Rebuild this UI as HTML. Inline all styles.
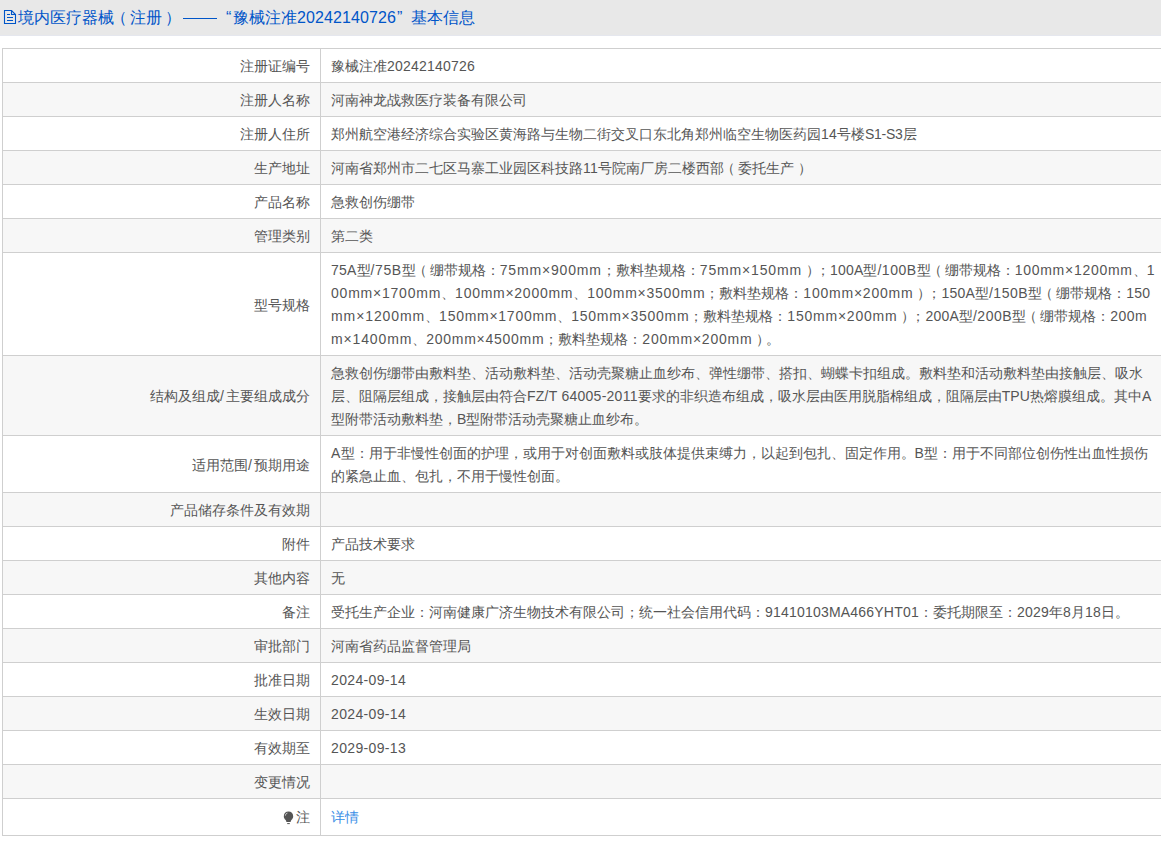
<!DOCTYPE html>
<html><head><meta charset="utf-8">
<style>
html,body{margin:0;padding:0;background:#fff;}
body{width:1161px;height:848px;overflow:hidden;position:relative;font-family:"Liberation Sans",sans-serif;}
.hd{position:absolute;left:0;top:0;width:1161px;height:35px;background:#e8e8e8;border-bottom:1px solid #e5e7ee;}
.hd span{position:absolute;top:8px;font-size:16px;line-height:20px;color:#0055c8;white-space:nowrap;}
.hd svg{position:absolute;}
table{position:absolute;left:2px;top:48px;border-collapse:collapse;width:1300px;font-size:14px;color:#555;}
td{border:1px solid #cfcfcf;padding:5px 10px;line-height:23px;white-space:nowrap;vertical-align:middle;}
td.l{width:297px;text-align:right;}
.x{position:relative;top:1px;}
.nt{position:relative;}
.po{position:relative;left:-3px;}
.pc{position:relative;left:4px;}
tr.last td{padding-top:6px;padding-bottom:7px;}
tr:nth-child(even) td{background:#f7f7f7;}
a{color:#3a8ee6;text-decoration:none;}
.bulb{position:absolute;left:-13px;top:2px;}
</style></head><body>
<div class="hd">
<svg width="20" height="26" viewBox="0 0 20 26" style="left:0;top:0"><g fill="none" stroke="#0055c8" stroke-width="1.1"><path d="M4.5 10.5H11.5L15.5 14.5V23.5H4.5Z"/><path d="M11.5 10.5V14.5H15.5"/><path d="M7 14.5H10M7 17.5H13M7 20.5H13"/></g></svg>
<span style="left:18px">境内医疗器械</span>
<span style="left:111px">（</span>
<span style="left:130px">注册</span>
<span style="left:165px">）</span>
<div style="position:absolute;left:183px;top:18px;width:34px;height:1px;background:#0055c8"></div>
<span style="left:226px">“</span>
<span style="left:233px">豫械注准</span>
<span style="left:297px;letter-spacing:0.102px">20242140726</span>
<span style="left:397px">”</span>
<span style="left:411px">基本信息</span>
</div>
<table>
<tr><td class="l"><span class="x">注册证编号</span></td><td><span class="x">豫械注准<span style="letter-spacing:0.214px">20242140726</span></span></td></tr>
<tr><td class="l"><span class="x">注册人名称</span></td><td><span class="x">河南神龙战救医疗装备有限公司</span></td></tr>
<tr><td class="l"><span class="x">注册人住所</span></td><td><span class="x">郑州航空港经济综合实验区黄海路与生物二街交叉口东北角郑州临空生物医药园<span style="letter-spacing:0.214px">14</span>号楼<span style="letter-spacing:-0.282px">S1-S3</span>层</span></td></tr>
<tr><td class="l"><span class="x">生产地址</span></td><td><span class="x">河南省郑州市二七区马寨工业园区科技路<span style="letter-spacing:0.214px">11</span>号院南厂房二楼西部<span class="po">（</span>委托生产<span class="pc">）</span></span></td></tr>
<tr><td class="l"><span class="x">产品名称</span></td><td><span class="x">急救创伤绷带</span></td></tr>
<tr><td class="l"><span class="x">管理类别</span></td><td><span class="x">第二类</span></td></tr>
<tr><td class="l"><span class="x">型号规格</span></td><td><span class="x"><span style="letter-spacing:0.197px">75A</span>型<span style="letter-spacing:0.600px">/75B</span>型<span class="po">（</span>绷带规格：<span style="letter-spacing:0.835px">75mm×900mm</span>；敷料垫规格：<span style="letter-spacing:0.835px">75mm×150mm</span><span class="pc">）</span>；<span style="letter-spacing:0.201px">100A</span>型<span style="letter-spacing:0.523px">/100B</span>型<span class="po">（</span>绷带规格：<span style="letter-spacing:0.731px">100mm×1200mm</span>、<span style="letter-spacing:0.214px">1</span><br><span style="letter-spacing:0.778px">00mm×1700mm</span>、<span style="letter-spacing:0.731px">100mm×2000mm</span>、<span style="letter-spacing:0.731px">100mm×3500mm</span>；敷料垫规格：<span style="letter-spacing:0.778px">100mm×200mm</span><span class="pc">）</span>；<span style="letter-spacing:0.201px">150A</span>型<span style="letter-spacing:0.523px">/150B</span>型<span class="po">（</span>绷带规格：<span style="letter-spacing:0.214px">150</span><br><span style="letter-spacing:0.903px">mm×1200mm</span>、<span style="letter-spacing:0.731px">150mm×1700mm</span>、<span style="letter-spacing:0.731px">150mm×3500mm</span>；敷料垫规格：<span style="letter-spacing:0.778px">150mm×200mm</span><span class="pc">）</span>；<span style="letter-spacing:0.201px">200A</span>型<span style="letter-spacing:0.523px">/200B</span>型<span class="po">（</span>绷带规格：<span style="letter-spacing:0.470px">200m</span><br><span style="letter-spacing:0.862px">m×1400mm</span>、<span style="letter-spacing:0.731px">200mm×4500mm</span>；敷料垫规格：<span style="letter-spacing:0.778px">200mm×200mm</span><span class="pc">）</span>。</span></td></tr>
<tr><td class="l"><span class="x">结构及组成<span style="letter-spacing:2.110px">/</span>主要组成成分</span></td><td><span class="x">急救创伤绷带由敷料垫、活动敷料垫、活动壳聚糖止血纱布、弹性绷带、搭扣、蝴蝶卡扣组成。敷料垫和活动敷料垫由接触层、吸水<br>层、阻隔层组成，接触层由符合<span style="letter-spacing:0.255px">FZ/T 64005-2011</span>要求的非织造布组成，吸水层由医用脱脂棉组成，阻隔层由<span style="letter-spacing:0.067px">TPU</span>热熔膜组成。其中<span style="letter-spacing:0.162px">A</span><br>型附带活动敷料垫，<span style="letter-spacing:-0.138px">B</span>型附带活动壳聚糖止血纱布。</span></td></tr>
<tr><td class="l"><span class="x">适用范围<span style="letter-spacing:2.110px">/</span>预期用途</span></td><td><span class="x"><span style="letter-spacing:0.162px">A</span>型：用于非慢性创面的护理，或用于对创面敷料或肢体提供束缚力，以起到包扎、固定作用。<span style="letter-spacing:-0.138px">B</span>型：用于不同部位创伤性出血性损伤<br>的紧急止血、包扎，不用于慢性创面。</span></td></tr>
<tr><td class="l"><span class="x">产品储存条件及有效期</span></td><td><span class="x"></span></td></tr>
<tr><td class="l"><span class="x">附件</span></td><td><span class="x">产品技术要求</span></td></tr>
<tr><td class="l"><span class="x">其他内容</span></td><td><span class="x">无</span></td></tr>
<tr><td class="l"><span class="x">备注</span></td><td><span class="x">受托生产企业：河南健康广济生物技术有限公司；统一社会信用代码：<span style="letter-spacing:0.204px">91410103MA466YHT01</span>：委托期限至：<span style="letter-spacing:0.214px">2029</span>年<span style="letter-spacing:0.214px">8</span>月<span style="letter-spacing:0.214px">18</span>日。</span></td></tr>
<tr><td class="l"><span class="x">审批部门</span></td><td><span class="x">河南省药品监督管理局</span></td></tr>
<tr><td class="l"><span class="x">批准日期</span></td><td><span class="x"><span style="letter-spacing:0.339px">2024-09-14</span></span></td></tr>
<tr><td class="l"><span class="x">生效日期</span></td><td><span class="x"><span style="letter-spacing:0.339px">2024-09-14</span></span></td></tr>
<tr><td class="l"><span class="x">有效期至</span></td><td><span class="x"><span style="letter-spacing:0.339px">2029-09-13</span></span></td></tr>
<tr><td class="l"><span class="x">变更情况</span></td><td><span class="x"></span></td></tr>
<tr class="last"><td class="l"><span class="x nt"><svg class="bulb" width="11" height="14" viewBox="0 0 11 14"><path d="M5.5 0.6C8.2 0.6 10.2 2.6 10.2 5.2C10.2 6.9 9.4 7.9 8.6 8.8C8 9.5 7.7 10.1 7.6 11H3.4C3.3 10.1 3 9.5 2.4 8.8C1.6 7.9 0.8 6.9 0.8 5.2C0.8 2.6 2.8 0.6 5.5 0.6Z" fill="#555"/><path d="M4.2 12.6H6.8" stroke="#555" stroke-width="1"/><path d="M2.4 4.6C2.5 3.3 3.3 2.4 4.4 2.1" stroke="#fff" stroke-width="0.9" fill="none" opacity="0.85"/></svg>注</span></td><td><span class="x"><a>详情</a></span></td></tr>
</table>
</body></html>
